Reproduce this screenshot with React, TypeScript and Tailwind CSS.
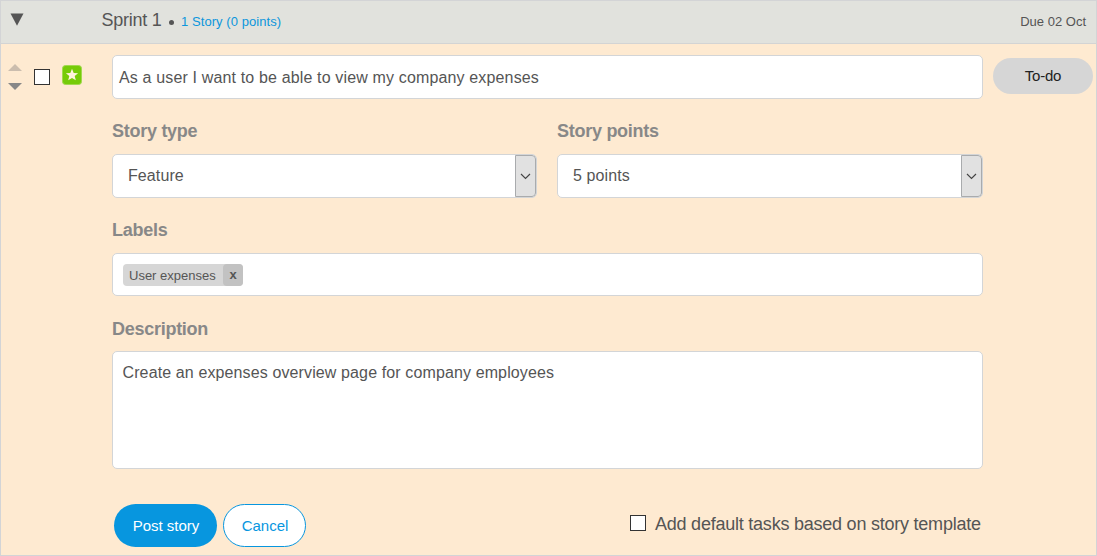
import React from "react";

const Chevron = () => (
  <span className="flex w-[21px] items-center justify-center rounded-r-[4px] border border-[#a9abad] bg-[#e1e1e1]">
    <svg width="11" height="7" viewBox="0 0 11 7" fill="none" stroke="#444" strokeWidth="1.15">
      <path d="M1 1L5.5 5.5L10 1" />
    </svg>
  </span>
);

const Checkbox = () => <span className="block size-4 shrink-0 border border-[#333] bg-white" />;

const Label = ({ children }: { children: React.ReactNode }) => (
  <h2 className="h-5 text-[18px] leading-5 font-bold tracking-[-0.27px] whitespace-nowrap text-[#888]">{children}</h2>
);

const Select = ({ label, value, className }: { label: string; value: string; className: string }) => (
  <div className={className}>
    <Label>{label}</Label>
    <div className="mt-[13px] flex h-11 justify-between rounded-[5px] border border-[#d3d5d7] bg-white pl-[15px]">
      <span className="text-base leading-[41px] tracking-[0.1px]">{value}</span>
      <Chevron />
    </div>
  </div>
);

export default function App() {
  return (
    <main className="flex h-[556px] w-[1097px] flex-col overflow-hidden border border-[#d3d4d6] bg-[#feead1] font-['Liberation_Sans',Arial,sans-serif] text-[#555]">
      <header className="flex h-[43px] shrink-0 items-start border-b border-[#d3d4d4] bg-[#e1e2dd] pr-2.5 pl-[9px]">
        <svg className="mt-3 shrink-0" width="14" height="13" viewBox="0 0 14 13" fill="#555">
          <path d="M0.5 0.5H13.5L7 12.8Z" />
        </svg>
        <span className="ml-[77.5px] w-[60.5px] text-[18px] leading-[38px] tracking-[-0.27px] whitespace-nowrap">Sprint 1</span>
        <span className="mt-[19px] ml-[7px] size-[5px] rounded-full bg-[#555]" />
        <a className="ml-[7px] text-[13px] leading-[41px] tracking-[0.07px] whitespace-nowrap text-[#0c96dc]">1 Story (0 points)</a>
        <span className="ml-auto text-[13px] leading-[41px] whitespace-nowrap">Due 02 Oct</span>
      </header>

      <div className="flex flex-1 items-start">
        <div className="flex w-[111px] shrink-0 items-start pl-[7px]">
          <div className="mt-5 flex flex-col gap-3">
            <svg width="14" height="7" viewBox="0 0 14 7" fill="#cbbdae"><path d="M7 0L14 7H0Z" /></svg>
            <svg width="14" height="7" viewBox="0 0 14 7" fill="#888"><path d="M0 0H14L7 7Z" /></svg>
          </div>
          <span className="mt-[25px] ml-3"><Checkbox /></span>
          <svg className="mt-[21px] ml-3" width="20" height="20" viewBox="0 0 20 20">
            <rect x="0.5" y="0.5" width="19" height="19" rx="3" fill="#76cb08" stroke="#a1d94f" />
            <path d="M10 3.8L11.7 7.9L16.1 8.2L12.7 11L13.8 15.3L10 13L6.2 15.3L7.3 11L3.9 8.2L8.3 7.9Z" fill="#fff3dd" />
          </svg>
        </div>

        <section className="w-[871px] shrink-0 pt-[11px]">
          <div className="h-11 rounded-[5px] border border-[#d3d5d7] bg-white pl-1.5 text-base leading-[44px] tracking-[0.15px] whitespace-nowrap">
            As a user I want to be able to view my company expenses
          </div>
          <div className="mt-[22px] flex justify-between">
            <Select label="Story type" value="Feature" className="w-[425px]" />
            <Select label="Story points" value="5 points" className="w-[426px]" />
          </div>
          <div className="mt-[22px]">
            <Label>Labels</Label>
            <div className="mt-[13px] flex h-[43px] items-center rounded-[5px] border border-[#d3d5d7] bg-white pl-[10px]">
              <span className="flex h-[22px] w-[120px] rounded-[4px] bg-[#d6d6d6] text-[13px] leading-6">
                <span className="w-[100px] pl-1.5 whitespace-nowrap">User expenses</span>
                <b className="w-5 rounded-[4px] bg-[#c2c2c2] text-center leading-[21px]">x</b>
              </span>
            </div>
          </div>
          <div className="mt-[23px]">
            <Label>Description</Label>
            <div className="mt-3 h-[118px] rounded-[5px] border border-[#d3d5d7] bg-white pt-[9px] pl-[9.5px] text-base leading-6 tracking-[0.12px]">
              Create an expenses overview page for company employees
            </div>
          </div>
          <div className="mt-[35px] flex items-start pl-0.5 text-[15px]">
            <button className="h-[43px] w-[103px] rounded-full bg-[#0796df] pt-px pl-px text-white">Post story</button>
            <button className="ml-1.5 h-[43px] w-[83px] rounded-full border border-[#0796df] bg-white pt-px pl-px text-[#0796df]">Cancel</button>
            <label className="mt-2.5 ml-auto flex items-start pr-0.5">
              <span className="mt-px"><Checkbox /></span>
              <span className="ml-[9px] w-[326px] text-[18px] leading-5 tracking-[-0.23px] whitespace-nowrap">Add default tasks based on story template</span>
            </label>
          </div>
        </section>

        <button className="mt-[14px] ml-2.5 h-9 w-[100px] shrink-0 rounded-full bg-[#d6d6d6] text-[15px] tracking-[-0.2px] text-[#222]">To-do</button>
      </div>
    </main>
  );
}
